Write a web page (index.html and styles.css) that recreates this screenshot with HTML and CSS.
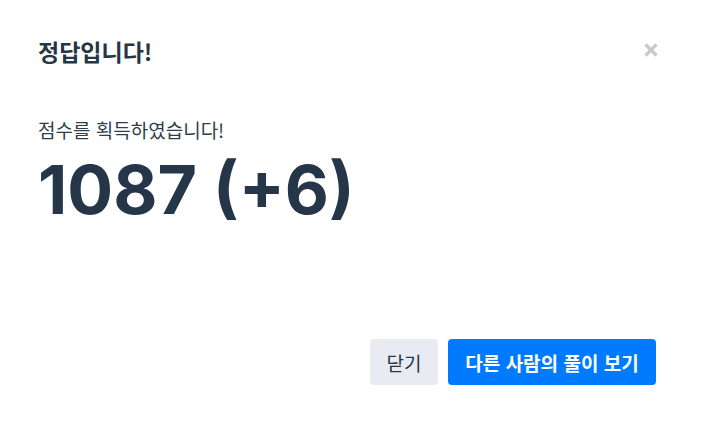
FILE: index.html
```html
<!DOCTYPE html>
<html lang="ko">
<head>
<meta charset="utf-8">
<link rel="stylesheet" href="styles.css">
</head>
<body>
<div class="modal">
  <div class="modal-header">
    <h2 class="modal-title">정답입니다!</h2>
    <button class="close-btn" aria-label="닫기">
      <svg width="16" height="16" viewBox="0 0 16 16"><path d="M2.5 2.5L13.5 13.5M13.5 2.5L2.5 13.5" stroke="#c9c9c9" stroke-width="3.2" stroke-linecap="butt"/></svg>
    </button>
  </div>
  <div class="modal-body">
    <p class="subtitle">점수를 획득하였습니다!</p>
    <div class="score">1087 (+6)</div>
  </div>
  <div class="modal-footer">
    <button class="btn btn-secondary">닫기</button>
    <button class="btn btn-primary">다른 사람의 풀이 보기</button>
  </div>
</div>
</body>
</html>
```
FILE: styles.css
```css
* { box-sizing: border-box; }
html, body { margin: 0; padding: 0; background: #fff; }
body {
  font-family: "Noto Sans CJK KR", "Noto Sans", sans-serif;
  color: #253646;
}
.modal {
  width: 704px;
  height: 433px;
  padding: 36px 48px 0 38px;
  display: flex;
  flex-direction: column;
}
.modal-header {
  display: flex;
  align-items: center;
  justify-content: space-between;
  height: 30px;
}
.modal-title {
  margin: 0;
  font-size: 23px;
  font-weight: 700;
  line-height: 30px;
}
.close-btn {
  border: 0;
  background: none;
  padding: 0;
  margin-right: -3px;
  margin-top: -2px;
  display: flex;
  cursor: pointer;
}
.modal-body {
  padding-top: 50px;
}
.subtitle {
  margin: 0;
  font-size: 19px;
  line-height: 28px;
  color: #2f3d4b;
}
.score {
  font-family: Inter, "Noto Sans", sans-serif;
  font-weight: 700;
  font-size: 68px;
  line-height: 80px;
  margin-top: 5px;
  color: #243647;
}
.modal-footer {
  margin-top: auto;
  margin-bottom: 48px;
  display: flex;
  justify-content: flex-end;
  gap: 10px;
}
.btn {
  height: 46px;
  border: 0;
  border-radius: 4px;
  font-family: "Noto Sans CJK KR", "Noto Sans", sans-serif;
  font-size: 19px;
  padding: 0;
}
.btn-secondary {
  background: #e8ebf2;
  color: #253646;
  font-weight: 400;
  width: 68px;
}
.btn-primary {
  background: #007bff;
  color: #fff;
  font-weight: 700;
  width: 208px;
}
```
